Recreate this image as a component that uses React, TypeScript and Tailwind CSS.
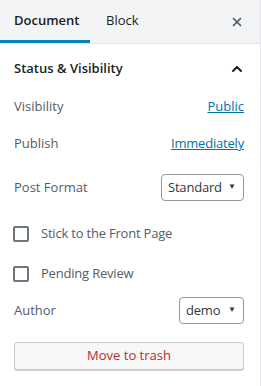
import { X, ChevronUp } from 'lucide-react'

const font = { fontFamily: '"Open Sans", "Noto Sans", sans-serif' }

function Select({ value, width }: { value: string; width: string }) {
  return (
    <div
      className={`${width} h-[27px] border border-[#8f98a1] rounded-[4px] bg-white flex items-center justify-between pl-[6px] pr-[7px] text-[13px] text-[#32373c]`}
    >
      <span className="tracking-[-0.2px]">{value}</span>
      <span className="text-[8px] text-[#32373c] leading-none mb-[3px]">▼</span>
    </div>
  )
}

function Check({ label }: { label: string }) {
  return (
    <div className="flex items-center h-[20px] gap-[12px]">
      <div className="w-[16px] h-[16px] border-2 border-[#6c7781] rounded-[2px] bg-white ml-[13px]" />
      <span className="text-[13px] text-[#555d66] tracking-[-0.2px]">{label}</span>
    </div>
  )
}

export default function App() {
  return (
    <div className="w-[261px] h-[386px] bg-white border-r border-[#e2e4e7] overflow-hidden" style={font}>
      {/* tabs */}
      <div className="h-[44px] bg-[#f3f4f5] border-b border-[#e2e4e7] flex items-stretch">
        <div className="w-[90px] pl-[14px] pb-[2px] flex items-center text-[13px] font-semibold text-[#191e23] shadow-[inset_0_-3px_0_#0085ba]">
          Document
        </div>
        <div className="pl-[16px] pb-[2px] flex items-center text-[13px] text-[#191e23]">Block</div>
        <div className="ml-auto w-[44px] flex items-center justify-center pr-[3px] text-[#555d66]">
          <X className="w-[14px] h-[14px]" strokeWidth={3} />
        </div>
      </div>

      {/* panel */}
      <div className="px-[14px] pr-[16px]">
        <div className="mt-[15px] h-[20px] flex items-center justify-between">
          <span className="text-[13px] font-semibold text-[#191e23]">Status &amp; Visibility</span>
          <ChevronUp className="w-[16px] h-[16px] text-[#191e23] mr-[-1px]" strokeWidth={3} />
        </div>

        <div className="mt-[18px] h-[20px] flex items-center justify-between text-[13px]">
          <span className="text-[#555d66]">Visibility</span>
          <span className="text-[#0073aa] underline">Public</span>
        </div>

        <div className="mt-[17px] h-[20px] flex items-center justify-between text-[13px]">
          <span className="text-[#555d66]">Publish</span>
          <span className="text-[#0073aa] underline tracking-[-0.2px]">Immediately</span>
        </div>

        <div className="mt-[20px] flex items-center justify-between text-[13px]">
          <span className="text-[#555d66]">Post Format</span>
          <Select value="Standard" width="w-[83px]" />
        </div>
      </div>

      <div className="mt-[23px]">
        <Check label="Stick to the Front Page" />
      </div>
      <div className="mt-[20px]">
        <Check label="Pending Review" />
      </div>

      <div className="px-[14px] pr-[16px]">
        <div className="mt-[13px] flex items-center justify-between text-[13px]">
          <span className="text-[#555d66]">Author</span>
          <Select value="demo" width="w-[65px]" />
        </div>

        <button className="mt-[18px] w-full h-[28px] bg-[#f7f7f7] border border-[#cccccc] rounded-[3px] shadow-[0_1px_0_#cccccc] text-[13px] text-[#b32d2e]">
          Move to trash
        </button>
      </div>
    </div>
  )
}
